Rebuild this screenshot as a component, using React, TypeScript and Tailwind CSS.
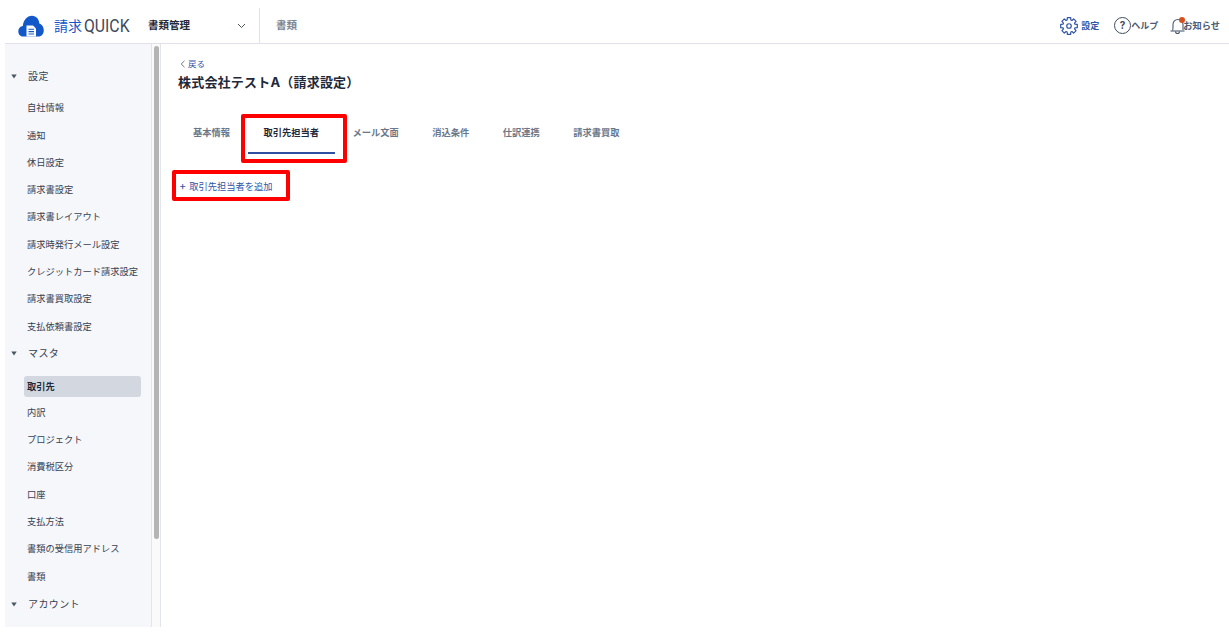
const settings = ["自社情報", "通知", "休日設定", "請求書設定", "請求書レイアウト", "請求時発行メール設定", "クレジットカード請求設定", "請求書買取設定", "支払依頼書設定"];
const masters = ["取引先", "内訳", "プロジェクト", "消費税区分", "口座", "支払方法", "書類の受信用アドレス", "書類"];
const tabs = ["基本情報", "取引先担当者", "メール文面", "消込条件", "仕訳連携", "請求書買取"];

function Caret() {
  return (
    <svg width="6" height="5" viewBox="0 0 6 5" className="shrink-0">
      <path d="M0.3 0.5h5.4L3 4.5z" fill="#4b5563" />
    </svg>
  );
}

function SideHeading({ label }: { label: string }) {
  return (
    <div className="flex h-[27px] items-center gap-[11px] pl-[6px] text-[10px] tracking-[0.4px] text-[#374151]">
      <Caret />
      <span>{label}</span>
    </div>
  );
}

function SideItem({ label, active }: { label: string; active?: boolean }) {
  return (
    <div className={active ? "mr-[19px] ml-[19px] flex h-[21px] items-center rounded-[3px] bg-[#d2d7e0] pl-[3px] font-semibold text-[#1f2937]" : "ml-[22px] flex h-[27.3px] items-center text-[#374151]"}>
      {label}
    </div>
  );
}

function Logo() {
  return (
    <svg width="26" height="22" viewBox="0 0 26 22" className="shrink-0">
      <path d="M5 21.5C2 21.5 0.3 19 0.3 16.2C0.3 13.4 2.2 11.3 4.8 11C5.4 5.5 9 0.8 14 0.8C18.5 0.8 21 4.5 21.4 8.4C24 9.2 25.8 12 25.8 15.2C25.8 18.8 23.6 21.5 20.5 21.5Z" fill="#1358c8" />
      <path d="M8.5 10.5h6.5l3 3v8h-9.5z" fill="#fff" />
      <path d="M10.5 14.2h5.5M10.5 16.6h5.5M10.5 19h5.5" stroke="#1358c8" strokeWidth="1.1" />
    </svg>
  );
}

// eight tooth cog outline
const gearPath = Array.from({ length: 8 }, (_, i) => {
  const a = (i * Math.PI) / 4;
  const pt = (r: number, d: number) => `${(12 + r * Math.cos(a + d)).toFixed(2)} ${(12 + r * Math.sin(a + d)).toFixed(2)}`;
  return `${i === 0 ? "M" : "L"}${pt(8.3, -0.3)} L${pt(11.3, -0.2)} L${pt(11.3, 0.2)} L${pt(8.3, 0.3)}`;
}).join(" ") + " Z";

function Gear() {
  return (
    <svg width="18" height="18" viewBox="0 0 24 24" fill="none" stroke="#2f55a8" strokeWidth="1.6" strokeLinejoin="round" className="shrink-0">
      <path d={gearPath} />
      <circle cx="12" cy="12" r="3" />
    </svg>
  );
}

function Help() {
  return (
    <div className="flex h-[17px] w-[17px] items-center justify-center rounded-full border-[1.5px] border-[#3f4d63] text-[10px] font-bold text-[#3f4d63]">?</div>
  );
}

function Bell() {
  return (
    <div className="relative h-[18px] w-[15px]">
      <svg width="15" height="18" viewBox="0 0 15 18" fill="none" stroke="#4b5a70" strokeWidth="1.1">
        <path d="M2.5 13.5C3.2 12.5 3 9 3 7.5C3 4.5 5 2.5 8 2.5S13 4.5 13 7.5V13" />
        <path d="M0.5 14h14" />
        <path d="M5.5 14.5a2 2 0 0 0 4 0" />
      </svg>
      <div className="absolute top-0 left-[9px] h-[6px] w-[6px] rounded-full bg-[#d5501f]" />
    </div>
  );
}

export default function App() {
  return (
    <div className="h-[638px] overflow-hidden bg-white pb-[11px] pl-[5px] font-['Inter','Noto_Sans_CJK_JP',sans-serif]">
      <header className="flex h-[44px] items-center border-b border-[#e0e2e9] pt-[8px]">
        <div className="ml-[13px] flex w-[125px] items-center gap-[10px]">
          <Logo />
          <span className="flex items-center whitespace-nowrap text-[#3f4a5a]">
            <span className="text-[14px] leading-none text-[#1358c8]">請求</span>
            <span className="ml-[2px] inline-block origin-left scale-x-[0.83] font-['Roboto',sans-serif] text-[19px] leading-none font-normal">QUICK</span>
          </span>
        </div>
        <div className="flex h-full flex-1 items-center">
          <span className="ml-[5px] w-[89px] text-[10.5px] font-bold text-[#1f2937]">書類管理</span>
          <svg width="9" height="6" viewBox="0 0 9 6" fill="none" stroke="#4b5563" strokeWidth="1"><path d="M1 1l3.5 3.5L8 1" /></svg>
          <div className="ml-[13px] h-[35px] self-end border-l border-[#e0e2e9]" />
          <span className="ml-[16px] text-[10.5px] font-semibold text-[#7b8794]">書類</span>
        </div>
        <div className="mr-[9px] flex items-center">
          <div className="flex items-center gap-[3px] text-[9px] font-semibold text-[#2f55a8]"><Gear />設定</div>
          <div className="ml-[15px] flex items-center text-[9px] font-semibold text-[#4b5a70]"><Help />ヘルプ</div>
          <div className="ml-[12px] flex items-center text-[9.25px] font-semibold text-[#4b5a70]"><Bell /><span className="-ml-[2px]">お知らせ</span></div>
        </div>
      </header>
      <div className="flex h-[583px]">
        <aside className="relative w-[156px] shrink-0 overflow-hidden border-r border-[#e3e5ea] bg-[#f5f7fb] pt-[19px] text-[9.25px]">
          <SideHeading label="設定" />
          <div className="pt-[4.5px]">
            {settings.map((s) => <SideItem key={s} label={s} />)}
          </div>
          <SideHeading label="マスタ" />
          <div className="mt-[9px]"><SideItem label="取引先" active /></div>
          <div className="pt-[2px]">
            {masters.slice(1).map((s) => <SideItem key={s} label={s} />)}
          </div>
          <div className="pt-[1px]">
            <SideHeading label="アカウント" />
          </div>
          <div className="absolute top-[0px] right-0 h-full w-[9px] border-l border-[#e3e5ea] bg-[#fafafa]">
            <div className="mx-auto mt-[2px] h-[493px] w-[5px] rounded-full bg-[#b4b4b4]" />
          </div>
        </aside>
        <main className="flex-1 pt-[13px] pl-[17px]">
          <div className="flex h-[14px] items-center gap-[2px] text-[8.5px] text-[#2f55a8]">
            <svg width="6" height="8" viewBox="0 0 6 8" fill="none" stroke="#4b5563" strokeWidth="0.8" className="ml-[2px]"><path d="M4.5 0.8L1.2 4l3.3 3.2" /></svg>
            戻る
          </div>
          <h1 className="mt-[1px] text-[13px] leading-[20px] font-bold tracking-[0.2px] text-[#1f2937]">株式会社テストA（請求設定）</h1>
          <nav className="mt-[20px] -ml-px flex h-[47px] gap-[1.5px] text-[9.25px] font-semibold text-[#6b7789]">
            {tabs.map((t, i) => (
              <div key={t} className={i === 1 ? "relative flex items-center px-[16px] pb-[6px] text-[#1f2937]" : "flex items-center px-[16px] pb-[6px]"}>
                {t}
                {i === 1 && <div className="absolute right-0 bottom-[5px] left-0 h-[2.5px] bg-[#2f4fa0]" />}
                {i === 1 && <div className="absolute top-[2px] -right-[12px] -bottom-[4px] -left-[7px] rounded-[2px] border-[4px] border-[#ff0000]" />}
              </div>
            ))}
          </nav>
          <div className="mt-[11px] -ml-[6px] flex h-[31px] w-[118px] items-center gap-[3px] rounded-[2px] border-[4px] border-[#ff0000] pt-[2px] pl-[3px] text-[9.25px] text-[#2f55a8]">
            <span className="text-[11px] leading-none">+</span>取引先担当者を追加
          </div>
        </main>
      </div>
    </div>
  );
}
